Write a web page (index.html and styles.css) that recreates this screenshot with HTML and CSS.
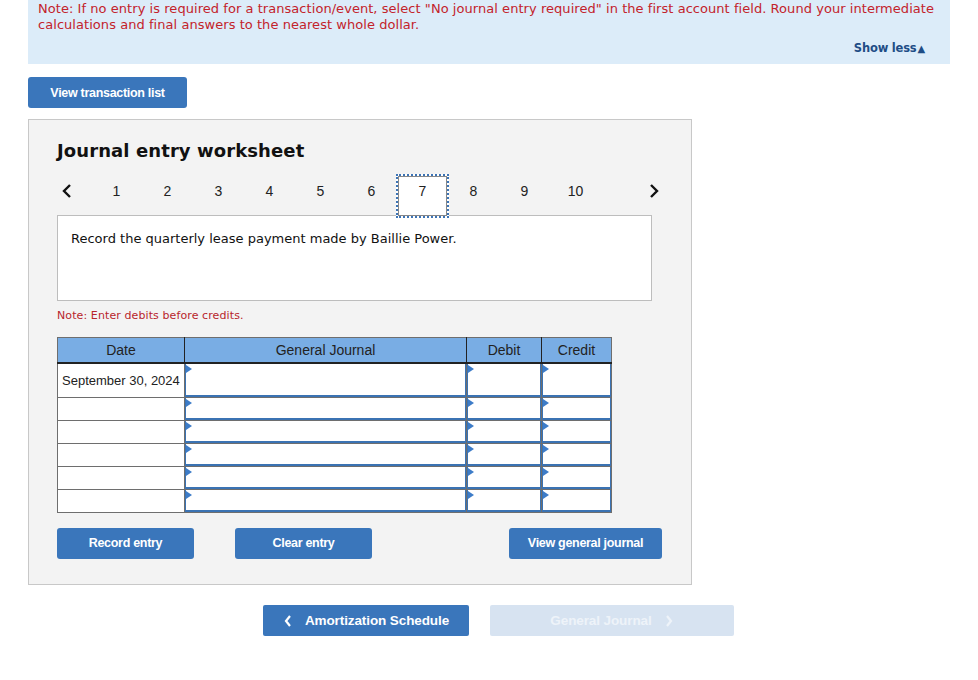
FILE: index.html
```html
<!DOCTYPE html>
<html lang="en">
<head>
    <meta charset="UTF-8">
    <title>Journal entry worksheet</title>
    <link rel="stylesheet" href="styles.css">
</head>
<body>
<div class="note_bar">
    <p class="note_text">Note: If no entry is required for a transaction/event, select "No journal entry required" in the first account field. Round your intermediate calculations and final answers to the nearest whole dollar.</p>
    <div class="show_less">Show less<span class="tri">&#9650;</span></div>
</div>

<a href="javascript:;" class="btn btn_view">View transaction list</a>

<div class="panel">
    <h2 class="title">Journal entry worksheet</h2>

    <div class="steps">
        <a href="javascript:;" class="arrow">
            <svg width="12" height="16" viewBox="0 0 12 16"><path d="M9 2 L3 8 L9 14" fill="none" stroke="#111" stroke-width="2.4"/></svg>
        </a>
        <div class="nums">
            <span>1</span><span>2</span><span>3</span><span>4</span><span>5</span>
            <span>6</span><span class="current">7</span><span>8</span><span>9</span><span>10</span>
        </div>
        <a href="javascript:;" class="arrow arrow_next">
            <svg width="12" height="16" viewBox="0 0 12 16"><path d="M3 2 L9 8 L3 14" fill="none" stroke="#111" stroke-width="2.4"/></svg>
        </a>
    </div>

    <div class="desc">Record the quarterly lease payment made by Baillie Power.</div>

    <p class="hint">Note: Enter debits before credits.</p>

    <table class="journal">
        <thead>
            <tr>
                <th class="c_date">Date</th>
                <th class="c_acct">General Journal</th>
                <th class="c_debit">Debit</th>
                <th class="c_credit">Credit</th>
            </tr>
        </thead>
        <tbody>
            <tr class="first">
                <td class="date">September 30, 2024</td>
                <td><div class="field"></div></td>
                <td><div class="field"></div></td>
                <td><div class="field"></div></td>
            </tr>
            <tr>
                <td class="date"></td>
                <td><div class="field"></div></td>
                <td><div class="field"></div></td>
                <td><div class="field"></div></td>
            </tr>
            <tr>
                <td class="date"></td>
                <td><div class="field"></div></td>
                <td><div class="field"></div></td>
                <td><div class="field"></div></td>
            </tr>
            <tr>
                <td class="date"></td>
                <td><div class="field"></div></td>
                <td><div class="field"></div></td>
                <td><div class="field"></div></td>
            </tr>
            <tr>
                <td class="date"></td>
                <td><div class="field"></div></td>
                <td><div class="field"></div></td>
                <td><div class="field"></div></td>
            </tr>
            <tr>
                <td class="date"></td>
                <td><div class="field"></div></td>
                <td><div class="field"></div></td>
                <td><div class="field"></div></td>
            </tr>
        </tbody>
    </table>

    <div class="actions">
        <a href="javascript:;" class="btn btn_record">Record entry</a>
        <a href="javascript:;" class="btn btn_clear">Clear entry</a>
        <a href="javascript:;" class="btn btn_journal">View general journal</a>
    </div>
</div>

<div class="pager">
    <a href="javascript:;" class="pbtn pbtn_prev">
        <svg class="chev" width="10" height="14" viewBox="0 0 10 14"><path d="M7 2 L3 7 L7 12" fill="none" stroke="#fff" stroke-width="2.2"/></svg>
        Amortization Schedule
    </a>
    <a href="javascript:;" class="pbtn pbtn_next">
        General Journal
        <svg class="chev chev_r" width="10" height="14" viewBox="0 0 10 14"><path d="M3 2 L7 7 L3 12" fill="none" stroke="#eef3f9" stroke-width="2.2"/></svg>
    </a>
</div>
</body>
</html>
```

FILE: styles.css
```css
* {
    margin: 0;
    padding: 0;
    box-sizing: border-box;
}
body {
    font-family: "DejaVu Sans", Verdana, sans-serif;
    color: #111;
    background: #fff;
}
a {
    text-decoration: none;
}

/* top note */
.note_bar {
    margin: 0 28px;
    height: 64px;
    background: #dcecf9;
    padding: 1px 10px 0 10px;
    display: flex;
    flex-direction: column;
}
.note_text {
    font-size: 13px;
    line-height: 16px;
    letter-spacing: 0.05px;
    color: #c3232b;
}
.show_less {
    margin-top: auto;
    margin-bottom: 9px;
    margin-right: 15px;
    align-self: flex-end;
    font-size: 11.5px;
    font-weight: bold;
    color: #1f4d86;
    letter-spacing: -0.2px;
}
.show_less .tri {
    font-size: 10px;
    margin-left: 1px;
}

/* buttons */
.btn {
    display: flex;
    align-items: center;
    justify-content: center;
    height: 31px;
    background: #3a76bb;
    color: #fff;
    border-radius: 3px;
    font-family: "Liberation Sans Narrow", "Liberation Sans", Arial, sans-serif;
    font-weight: bold;
    font-size: 12.5px;
    letter-spacing: -0.3px;
}
.btn_view {
    width: 159px;
    margin: 13px 0 0 28px;
}

/* worksheet panel */
.panel {
    width: 664px;
    height: 466px;
    margin: 11px 0 0 28px;
    background: #f3f3f3;
    border: 1px solid #c8c8c8;
    padding: 20px 39px 0 28px;
}
.title {
    font-size: 18px;
    font-weight: bold;
    line-height: 22px;
    color: #111;
    letter-spacing: 0.1px;
}

.steps {
    display: flex;
    align-items: flex-start;
    height: 44px;
    margin-top: 12px;
    margin-bottom: -3px;
    position: relative;
    z-index: 1;
}
.arrow {
    display: flex;
    width: 20px;
    justify-content: center;
    padding-top: 9px;
}
.arrow_next {
    margin-left: auto;
    margin-right: -12px;
}
.nums {
    display: flex;
    margin-left: 14px;
}
.nums span {
    width: 51px;
    height: 44px;
    display: flex;
    justify-content: center;
    padding-top: 9px;
    line-height: 16px;
    font-family: "Liberation Sans", Arial, sans-serif;
    font-size: 14px;
    color: #222;
}
.nums .current {
    width: 53px;
    margin: 0 -1px;
    background: #fff;
    border: 2px dotted #3d74b5;
    padding-top: 7px;
    outline: 1px solid #888;
    outline-offset: -3px;
}

.desc {
    height: 86px;
    background: #fff;
    border: 1px solid #bdbdbd;
    padding: 15px 13px;
    font-size: 13px;
    line-height: 16px;
    color: #111;
}

.hint {
    margin-top: 8px;
    font-size: 11px;
    line-height: 14px;
    color: #b8252c;
    letter-spacing: 0.1px;
}

/* journal table */
.journal {
    margin-top: 14px;
    border-collapse: collapse;
    width: 555px;
    border: 1px solid #6e6e6e;
    font-family: "Liberation Sans", Arial, sans-serif;
    font-size: 14px;
}
.journal th {
    height: 25px;
    background: #79ade4;
    color: #222;
    font-weight: normal;
    border-right: 1px solid #222;
    border-bottom: 2px solid #222;
    text-align: center;
    padding: 0;
}
.journal th:last-child {
    border-right: 1px solid #6e6e6e;
}
.c_date { width: 127px; }
.c_acct { width: 282px; }
.c_debit { width: 75px; }
.c_credit { width: 70px; }

.journal td {
    height: 23px;
    padding: 0;
    border: 1px solid #6e6e6e;
    background: #fff;
    vertical-align: top;
}
.journal tr.first td {
    height: 34px;
}
.journal td.date {
    vertical-align: middle;
    padding-left: 4px;
    font-size: 13px;
    color: #222;
    white-space: nowrap;
}
.field {
    position: relative;
    height: 100%;
    min-height: 22px;
    border-left: 1px solid #3b73b3;
    border-right: 1px solid #3b73b3;
    border-bottom: 2px solid #3b73b3;
}
.journal tr.first td .field {
    min-height: 33px;
}
.field::before {
    content: "";
    position: absolute;
    left: 0;
    top: 1px;
    border-left: 6px solid #3d7cc8;
    border-top: 4px solid transparent;
    border-bottom: 4px solid transparent;
}

.actions {
    display: flex;
    margin-top: 15px;
}
.btn_record,
.btn_clear {
    width: 137px;
    margin-right: 41px;
}
.btn_journal {
    width: 153px;
    margin-left: auto;
    margin-right: -10px;
}

/* bottom pager */
.pager {
    display: flex;
    gap: 21px;
    margin: 20px 0 0 263px;
}
.pbtn {
    display: flex;
    align-items: center;
    justify-content: center;
    height: 31px;
    border-radius: 2px;
    font-family: "Liberation Sans", Arial, sans-serif;
    font-weight: bold;
    font-size: 13.5px;
    letter-spacing: -0.1px;
}
.pbtn_prev {
    width: 206px;
    background: #3a76bb;
    color: #fff;
}
.pbtn_next {
    width: 244px;
    background: #d7e3f1;
    color: #eef3f9;
}
.chev {
    margin-right: 12px;
}
.chev_r {
    margin: 0 0 0 12px;
}
```
